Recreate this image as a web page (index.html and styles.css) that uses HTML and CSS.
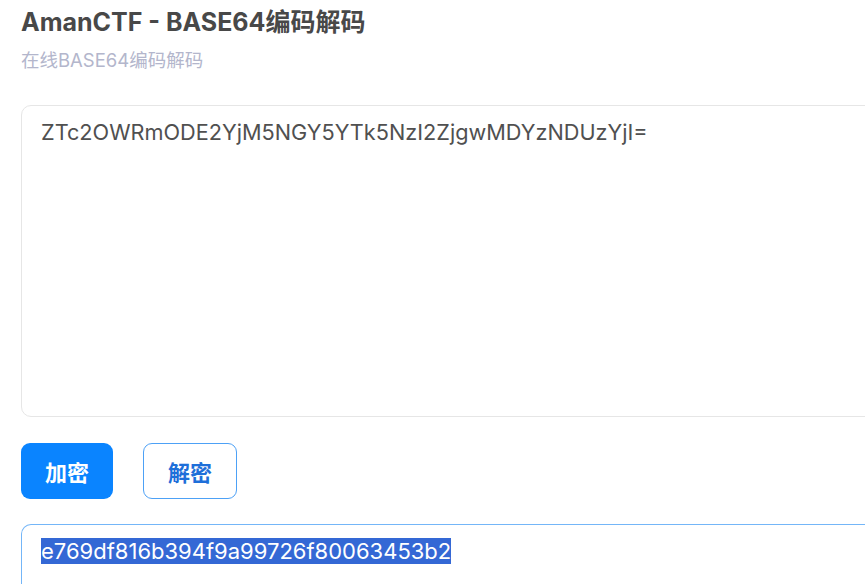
FILE: index.html
```html
<!DOCTYPE html>
<html lang="zh">
<head>
<meta charset="utf-8">
<link rel="stylesheet" href="styles.css">
</head>
<body>
<div class="page">
  <h1 class="title">AmanCTF - BASE64编码解码</h1>
  <p class="subtitle">在线BASE64编码解码</p>
  <div class="input-box">ZTc2OWRmODE2YjM5NGY5YTk5NzI2ZjgwMDYzNDUzYjI=</div>
  <div class="actions">
    <button class="btn btn-primary">加密</button>
    <button class="btn btn-outline">解密</button>
  </div>
  <div class="output-box"><span class="sel">e769df816b394f9a99726f80063453b2</span></div>
</div>
</body>
</html>
```
FILE: styles.css
```css
html, body {
  margin: 0;
  padding: 0;
  background: #ffffff;
  overflow: hidden;
}
.page {
  padding: 7px 0 0 21px;
  width: 900px;
  font-family: Inter, "Noto Sans CJK SC", sans-serif;
}
.title {
  margin: 0;
  font-size: 25px;
  font-weight: 700;
  color: #484848;
  line-height: 30px;
}
.subtitle {
  margin: 11px 0 0 0;
  font-size: 18.5px;
  color: #b3b6cc;
  line-height: 24px;
}
.input-box {
  margin-top: 33px;
  border: 1px solid #e6e6e6;
  border-radius: 10px;
  padding: 11px 19px;
  box-sizing: border-box;
  height: 312px;
  font-size: 21.7px;
  color: #505050;
  line-height: 30px;
}
.actions {
  display: flex;
  gap: 30px;
  margin-top: 26px;
}
.btn {
  height: 56px;
  border-radius: 9px;
  font-family: "Noto Sans CJK SC", sans-serif;
  font-size: 22px;
  font-weight: 700;
  padding: 0;
}
.btn-primary {
  background: #0a84ff;
  color: #ffffff;
  border: none;
  width: 92px;
}
.btn-outline {
  background: #ffffff;
  color: #1e6fd9;
  border: 1px solid #4da1f6;
  width: 94px;
}
.output-box {
  margin-top: 25px;
  border: 1px solid #74b6f8;
  border-bottom: none;
  border-radius: 10px 0 0 0;
  height: 70px;
  padding: 12px 19px;
  box-sizing: border-box;
  font-size: 22px;
  line-height: 28px;
  color: #333;
}
.sel {
  background: #3468d5;
  color: #ffffff;
}
```
